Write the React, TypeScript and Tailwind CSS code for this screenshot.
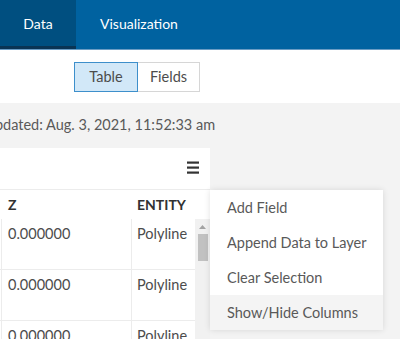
import React from "react";

const font = { fontFamily: "Lato, 'Open Sans', sans-serif" };

function Row({ last }: { last?: boolean }) {
  return (
    <div className={`flex h-[51px] ${last ? "" : "border-b border-[#ececec]"}`}>
      <div className="w-[2px] border-r border-[#ececec]" />
      <div className="w-[130px] border-r border-[#ececec] pl-[6px] pt-[5px] text-[14.5px] leading-[20px] text-[#4c4c4c]">0.000000</div>
      <div className="flex-1 pl-[5px] pt-[5px] text-[14.5px] leading-[20px] text-[#4c4c4c]">Polyline</div>
    </div>
  );
}

export default function App() {
  return (
    <div className="relative h-[339px] w-[400px] overflow-hidden bg-[#f3f3f3]" style={font}>
      {/* header */}
      <div className="flex h-[50px] bg-[#0062a0] border-b border-[#6a9cc4]">
        <div className="flex h-full w-[76px] items-center justify-center border-b-[3px] border-[#0a3454] bg-[#004f80] text-[14px] text-white">
          Data
        </div>
        <div className="flex h-full items-center pl-[24px] pb-[2px] text-[14px] text-white">Visualization</div>
      </div>
      {/* toolbar */}
      <div className="flex h-[53px] bg-white pl-[74px] pt-[12px]">
        <div className="flex h-[30px] w-[64px] items-center justify-center border border-[#3d8fcb] bg-[#d2e8f8] text-[14.5px] text-[#4c4c4c]">
          Table
        </div>
        <div className="flex h-[30px] w-[62px] items-center justify-center border border-l-0 border-[#d6d6d6] bg-white text-[14.5px] text-[#4c4c4c]">
          Fields
        </div>
      </div>
      {/* updated text */}
      <div className="h-[45px] whitespace-nowrap pt-[11px] text-[14.5px] text-[#595959] -ml-[43px]">
        Last updated: Aug. 3, 2021, 11:52:33 am
      </div>
      {/* card */}
      <div className="w-[210px] bg-white">
        <div className="flex h-[42px] justify-end border-b border-[#ececec] pr-[11px] pt-[13px]">
          <svg width="12" height="13" viewBox="0 0 12 13">
            <rect x="0" y="0.5" width="12" height="2.2" fill="#333" />
            <rect x="0" y="5.5" width="12" height="2.2" fill="#333" />
            <rect x="0" y="10.5" width="12" height="2.2" fill="#333" />
          </svg>
        </div>
        <div className="flex h-[29px] items-center text-[14px] font-bold text-[#323232]">
          <div className="w-[132px] pl-[8px]">Z</div>
          <div className="pl-[5px]">ENTITY</div>
        </div>
        <div className="flex">
          <div className="w-[195px]">
            <Row />
            <Row />
            <Row last />
          </div>
          <div className="flex w-[15px] flex-col items-center bg-[#f1f1f1] pt-[6px]">
            <svg width="7" height="4" viewBox="0 0 7 4">
              <path d="M3.5 0 L7 4 L0 4 Z" fill="#a3a3a3" />
            </svg>
            <div className="mt-[5px] h-[27px] w-[10px] bg-[#c1c1c1]" />
          </div>
        </div>
      </div>
      {/* menu */}
      <div className="absolute left-[210px] top-[190px] w-[173px] bg-white shadow-[0_0_6px_rgba(0,0,0,0.12)] text-[14.5px] text-[#595959]">
        <div className="flex h-[35px] items-center pl-[17px]">Add Field</div>
        <div className="flex h-[35px] items-center pl-[17px]">Append Data to Layer</div>
        <div className="flex h-[35px] items-center pl-[17px]">Clear Selection</div>
        <div className="flex h-[35px] items-center bg-[#f4f4f4] pl-[17px]">Show/Hide Columns</div>
      </div>
    </div>
  );
}
